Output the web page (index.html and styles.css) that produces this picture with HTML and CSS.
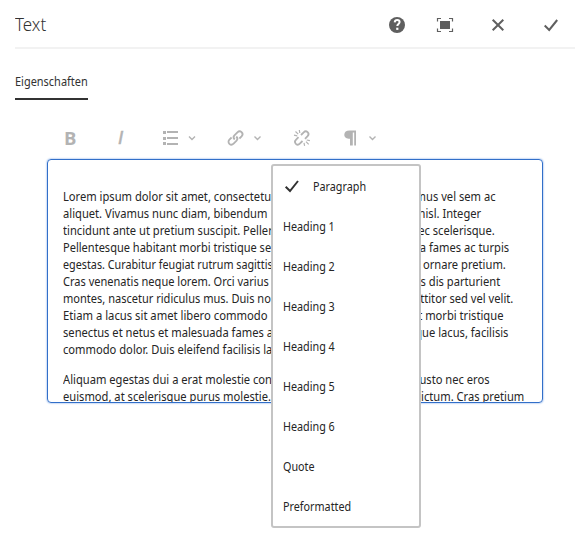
FILE: index.html
```
<!DOCTYPE html>
<html lang="de">
<head>
<meta charset="utf-8">
<title>Text</title>
<link rel="stylesheet" href="styles.css">
</head>
<body>
<main class="dialog">
  <header class="header">
    <h1 class="title"><span class="fit">Text</span></h1>
    <div class="actions">
      <svg class="act help" viewBox="0 0 18 18"><circle cx="9" cy="9" r="8" fill="#5f5f5f"/><path d="M6.700 6.400C6.900 4.700 8 4.100 9.200 4.100c1.400 0 2.400.8 2.400 2 0 1.800-2.300 1.900-2.300 3.900" fill="none" stroke="#fff" stroke-width="2"/><rect x="8.200" y="11.700" width="2.200" height="2.200" fill="#fff"/></svg>
      <svg class="act" viewBox="0 0 18 18"><path d="M4 5h10v8H4z" fill="#5f5f5f"/><path d="M1.500 5.500v-3H5M13 2.500h3.500v3M16.500 12.500v3H13M5 15.500H1.500v-3" fill="none" stroke="#5f5f5f" stroke-width="1.200"/></svg>
      <svg class="act" viewBox="0 0 18 18"><path d="M3.700 3.700l10.600 10.600M14.300 3.700L3.700 14.300" fill="none" stroke="#5f5f5f" stroke-width="2"/></svg>
      <svg class="act" viewBox="0 0 18 18"><path d="M2.700 9.500l4.500 4.400L15.200 4" fill="none" stroke="#5f5f5f" stroke-width="2"/></svg>
    </div>
  </header>
  <nav class="tabs"><a class="tab"><span class="fit">Eigenschaften</span></a></nav>
  <div class="toolbar">
    <span class="tool bold">B</span>
    <span class="tool italic">I</span>
    <svg class="tool list" viewBox="0 0 34 18"><path d="M1 2h3v3H1zM1 8h3v3H1zM1 13h3v3H1zM5 2h11v2H5zM5 8h11v2H5zM5 14h11v2H5z" fill="#b3b3b3"/><path d="M27 7.500l3 3 3-3" class="chev"/></svg>
    <svg class="tool link" viewBox="0 0 34 18"><g class="stroke"><path d="M7.700 10.500C6.200 9 6.300 7.500 7.400 6.400l3-3c1.300-1.300 3-1.300 4.200-.2 1.200 1.200 1.200 2.900 0 4.100l-2.200 2.200"/><path d="M9.300 7.500c1.500 1.500 1.400 3 .3 4.100l-3 3c-1.300 1.300-3 1.300-4.200.2-1.200-1.200-1.200-2.900 0-4.100l2.200-2.200"/></g><path d="M27.500 7.500l3 3 3-3" class="chev"/></svg>
    <svg class="tool unlink" viewBox="0 0 18 18"><g class="stroke"><path d="M8 6l2.700-2.700c1.200-1.200 2.700-1.200 3.900-.1 1.200 1.200 1.200 2.700 0 3.900L12 9.800"/><path d="M9.500 12l-2.700 2.700c-1.200 1.200-2.700 1.200-3.900.1-1.200-1.200-1.200-2.700 0-3.900L5.500 8.200"/></g><path d="M1 6.200l3.200.6M2.500 2.500l2.700 2.700M6.300 1l.5 3M11 13.800l.6 3M13 12.700l2.700 2.700M13.700 11l3.200.7" fill="none" stroke="#b3b3b3" stroke-width="1.200"/></svg>
    <svg class="tool para" viewBox="0 0 34 18"><path d="M6.500 1.500H13v15h-1.800V3.500H9.800v13H7V9.800c-3.400 0-5.700-1.500-5.700-4.100 0-2.700 2-4.200 5.200-4.200z" fill="#b3b3b3"/><path d="M26.500 7.500l3 3 3-3" class="chev"/></svg>
  </div>
  <div class="stage">
    <section class="editor">
      <div class="copy">
        <div class="line w1"><span class="lead">Lorem ipsum dolor sit amet, consectetu</span><span class="trail">mus vel sem ac</span></div>
        <div class="line w2"><span class="lead">aliquet. Vivamus nunc diam, bibendum</span><span class="trail">nisl. Integer</span></div>
        <div class="line w3"><span class="lead">tincidunt ante ut pretium suscipit. Peller</span><span class="trail">ec scelerisque.</span></div>
        <div class="line w4"><span class="lead">Pellentesque habitant morbi tristique se</span><span class="trail">a fames ac turpis</span></div>
        <div class="line w5"><span class="lead">egestas. Curabitur feugiat rutrum sagittis</span><span class="trail">ornare pretium.</span></div>
        <div class="line w6"><span class="lead">Cras venenatis neque lorem. Orci varius</span><span class="trail">s dis parturient</span></div>
        <div class="line w7"><span class="lead">montes, nascetur ridiculus mus. Duis no</span><span class="trail">ttitor sed vel velit.</span></div>
        <div class="line w8"><span class="lead">Etiam a lacus sit amet libero commodo</span><span class="trail">t morbi tristique</span></div>
        <div class="line w9"><span class="lead">senectus et netus et malesuada fames a</span><span class="trail">que lacus, facilisis</span></div>
        <div class="line w10"><span class="lead">commodo dolor. Duis eleifend facilisis la</span></div>
      </div>
      <div class="copy">
        <div class="line w11"><span class="lead">Aliquam egestas dui a erat molestie con</span><span class="trail">usto nec eros</span></div>
        <div class="line w12"><span class="lead">euismod, at scelerisque purus molestie.</span><span class="trail">dictum. Cras pretium</span></div>
      </div>
    </section>
    <ul class="menu">
      <li class="item chosen"><svg class="check" viewBox="0 0 18 18"><path d="M2.700 9.700l4.300 4.300L15 4" fill="none" stroke="#323232" stroke-width="2"/></svg><span class="fit">Paragraph</span></li>
      <li class="item"><span class="fit">Heading 1</span></li>
      <li class="item"><span class="fit">Heading 2</span></li>
      <li class="item"><span class="fit">Heading 3</span></li>
      <li class="item"><span class="fit">Heading 4</span></li>
      <li class="item"><span class="fit">Heading 5</span></li>
      <li class="item"><span class="fit">Heading 6</span></li>
      <li class="item"><span class="fit">Quote</span></li>
      <li class="item"><span class="fit">Preformatted</span></li>
    </ul>
  </div>
</main>
</body>
</html>
```
FILE: styles.css
```
* { box-sizing: border-box; }
body { margin: 0; background: #fff; color: #252525; font: 12.5px/17px "Noto Sans", sans-serif; }
.dialog { width: 575px; height: 558px; padding-left: 15px; }
.header { display: flex; justify-content: space-between; align-items: center; height: 49px; border-bottom: 2px solid #f2f2f2; }
.title { margin: 0; font-size: 19px; font-weight: 300; line-height: 24px; color: #323232; }
.fit { display: inline-block; white-space: nowrap; transform: scaleX(.893); transform-origin: left; }
.actions { display: flex; gap: 35px; padding: 2px 15px 0 0; }
.act { width: 18px; height: 18px; }
.help { margin-right: -5px; }
.tabs { height: 51px; padding-top: 24px; }
.tab { display: block; width: 73px; height: 27px; border-bottom: 2px solid #323232; font-size: 12px; line-height: 18px; color: #323232; }
.tab .fit { transform: scaleX(.913); }
.toolbar { display: flex; align-items: center; height: 28px; margin: 24px 0 7px; padding-left: 49px; color: #b3b3b3; }
.tool { flex: none; height: 18px; line-height: 18px; }
.bold { width: 53px; font: 700 18.5px/18px "Open Sans", sans-serif; }
.italic { width: 45px; padding-left: 1px; font: italic 700 19px/18px "Open Sans", sans-serif; font-family: "Liberation Sans", sans-serif; font-weight: 400; -webkit-text-stroke: .5px #b3b3b3; }
.list { width: 34px; margin-right: 31px; }
.link { width: 34px; margin-right: 32px; }
.unlink { width: 18px; margin-right: 32px; }
.para { width: 34px; }
.chev { fill: none; stroke: #b3b3b3; stroke-width: 1.4; }
.stroke { fill: none; stroke: #b3b3b3; stroke-width: 1.8; }
.stage { position: relative; margin-left: 32px; }
.editor { width: 496px; height: 244px; padding: 28px 0 0 15px; overflow: hidden; border: 1px solid #326fc9; border-radius: 4px; box-shadow: 0 0 2px #5c92e0; }
.copy { margin-bottom: 13px; }
.line { display: flex; justify-content: space-between; height: 17px; white-space: nowrap; }
.lead, .trail { flex: none; transform: scaleX(.893); transform-origin: left; }
.trail { transform-origin: right; }
.w1 { width: 433px; }
.w2 { width: 418px; }
.w3 { width: 432px; }
.w4 { width: 446px; }
.w5 { width: 443px; }
.w6 { width: 437px; }
.w7 { width: 450px; }
.w8 { width: 440px; }
.w9 { width: 445px; }
.w11 { width: 427px; }
.w12 { width: 461px; }
.w5 .lead { transform: scaleX(.862); }
.w4 .lead, .w6 .lead, .w7 .lead { transform: scaleX(.883); }
.w8 .lead { transform: scaleX(.9); }
.menu { position: absolute; left: 224px; top: 5px; width: 150px; height: 364px; margin: 0; padding: 0 0 0 10px; list-style: none; background: #fff; border: 2px solid #c4c4c4; border-radius: 3px; }
.item { display: flex; align-items: center; height: 40px; }
.item .fit { transform: scaleX(.862); }
.chosen { gap: 12px; }
.check { width: 18px; height: 18px; }
```
